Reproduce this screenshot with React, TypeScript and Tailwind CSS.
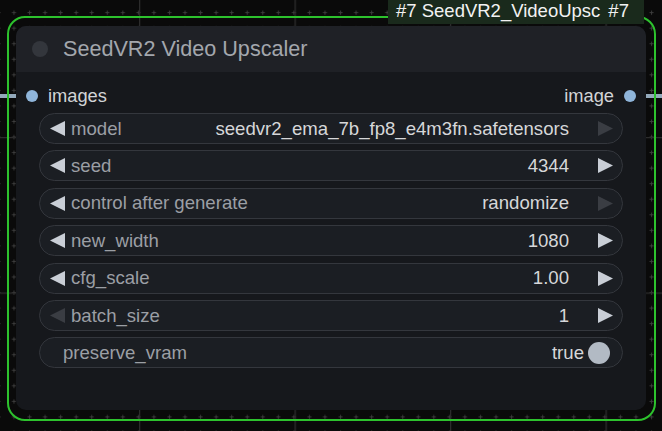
import React from 'react';

type Row = {
  label: string;
  value: string;
  left: boolean;
  right: boolean;
};

const ROWS: Row[] = [
  { label: 'model', value: 'seedvr2_ema_7b_fp8_e4m3fn.safetensors', left: true, right: false },
  { label: 'seed', value: '4344', left: true, right: true },
  { label: 'control after generate', value: 'randomize', left: true, right: false },
  { label: 'new_width', value: '1080', left: true, right: true },
  { label: 'cfg_scale', value: '1.00', left: true, right: true },
  { label: 'batch_size', value: '1', left: false, right: true },
];

function Arrow({ dir, on }: { dir: 'left' | 'right'; on: boolean }) {
  return (
    <svg width="15" height="15" viewBox="0 0 15 15" className="shrink-0">
      <polygon
        points={dir === 'left' ? '15,0 15,15 0,7.5' : '0,0 0,15 15,7.5'}
        fill={on ? '#c9ced6' : '#3a3d43'}
      />
    </svg>
  );
}

function CanvasGrid() {
  return (
    <svg className="absolute inset-0" width="662" height="431">
      <defs>
        <pattern id="minor" x="11.5" y="10.2" width="15.55" height="15.55" patternUnits="userSpaceOnUse">
          <path d="M2.5 0.5V4.5M0.5 2.5H4.5" stroke="#3c3c3c" strokeWidth="1" />
        </pattern>
        <pattern id="major" x="-16.5" y="-18.5" width="155.5" height="155.5" patternUnits="userSpaceOnUse">
          <path d="M0 0V155.5M0 0H155.5" stroke="#2c2c2c" strokeWidth="2.5" />
        </pattern>
      </defs>
      <rect width="662" height="431" fill="url(#minor)" />
      <rect width="662" height="431" fill="url(#major)" />
    </svg>
  );
}

export default function App() {
  return (
    <div className="relative w-[662px] h-[431px] overflow-hidden bg-[#0a0a0a] font-['Liberation_Sans',Arial,sans-serif]">
      <CanvasGrid />

      {/* links into / out of the node */}
      <div className="absolute left-0 top-[94px] w-[20px] h-[4px] bg-[#93a9bb]" />
      <div className="absolute right-0 top-[94px] w-[20px] h-[4px] bg-[#93a9bb]" />

      {/* selection outline */}
      <div className="absolute left-[7px] top-[16px] w-[649px] h-[405px] rounded-[18px] border-2 border-[#2dc22d]" />

      {/* node */}
      <div className="absolute left-[16px] top-[26px] w-[630px] h-[384px] rounded-[10px] overflow-hidden bg-[#16181c] flex flex-col">
        <div className="h-[46px] bg-[#1f2126] flex items-center pl-[16px] gap-[15px]">
          <span className="w-4 h-4 rounded-full bg-[#33363c]" />
          <span className="text-[21.6px] text-[#a3a7ad] leading-none">SeedVR2 Video Upscaler</span>
        </div>

        <div className="mt-[12px] h-[24px] flex items-center justify-between px-[10px] text-[18.3px] text-[#d2d4d6]">
          <div className="flex items-center gap-[10px]">
            <span className="w-3 h-3 rounded-full bg-[#8fb5da]" />
            <span>images</span>
          </div>
          <div className="flex items-center gap-[10px]">
            <span>image</span>
            <span className="w-3 h-3 rounded-full bg-[#8fb5da]" />
          </div>
        </div>

        <div className="mt-[5px] px-[23px] flex flex-col gap-[6.4px] text-[18.6px]">
          {ROWS.map((r) => (
            <div
              key={r.label}
              className="h-[31px] rounded-full border border-[#34373d] bg-[#1b1e23] flex items-center pl-[10px] pr-[9px]"
            >
              <Arrow dir="left" on={r.left} />
              <span className="ml-[6px] text-[#9b9fa5]">{r.label}</span>
              <span className="ml-auto text-[#d6d7d9]">{r.value}</span>
              <span className="ml-[29px]">
                <Arrow dir="right" on={r.right} />
              </span>
            </div>
          ))}
          <div className="h-[31px] rounded-full border border-[#34373d] bg-[#1b1e23] flex items-center pl-[23px] pr-[12px]">
            <span className="text-[#9b9fa5]">preserve_vram</span>
            <span className="ml-auto text-[#d6d7d9]">true</span>
            <span className="ml-[4px] w-[22px] h-[22px] rounded-full bg-[#b2bac4]" />
          </div>
        </div>
      </div>

      {/* title badge */}
      <div className="absolute left-[388px] top-0 w-[256px] h-[24px] bg-[#1a2a1c] flex items-center pl-[8px] pb-[2px] text-[18.5px] text-[#f2f2f2] whitespace-nowrap">
        <span>#7 SeedVR2_VideoUpsc</span>
        <span className="ml-[8px]">#7</span>
      </div>
    </div>
  );
}
